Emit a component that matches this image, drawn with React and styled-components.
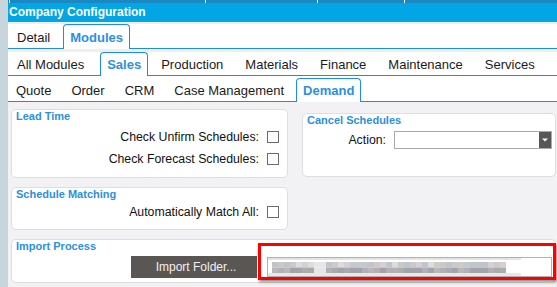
import styled, { createGlobalStyle } from "styled-components";

const GlobalStyle = createGlobalStyle`
  html, body { margin: 0; padding: 0; }
  body {
    font-family: "Liberation Sans", Arial, sans-serif;
    background: #f2f2f4;
  }
  * { box-sizing: border-box; }
`;

const Page = styled.div`
  display: flex;
  width: 557px;
  height: 287px;
  overflow: hidden;
`;

const SideStrip = styled.div`
  width: 8px;
  flex-shrink: 0;
  background: #c6d6dc;
`;

const Main = styled.div`
  flex: 1;
  min-width: 0;
  display: flex;
  flex-direction: column;
  background: #f2f2f4;
`;

const TopStrip = styled.div`
  display: flex;
  height: 3px;
  background: #1c88c2;
`;

const StripSegment = styled.div`
  flex: ${(p) => (p.w ? `0 0 ${p.w}px` : "1")};
  border-right: ${(p) => (p.w ? "1px solid #ffffff" : "none")};
`;

const TitleBar = styled.div`
  height: 19px;
  line-height: 19px;
  padding-left: 1px;
  background: #02a6e4;
  color: #ffffff;
  font-size: 12px;
  font-weight: bold;
`;

const Band = styled.div`
  height: ${(p) => p.h}px;
  background: #efeff0;
`;

// the blue rule under each tab strip is drawn by ::after; the active tab sits above it
const TabRow = styled.div`
  position: relative;
  display: flex;
  align-items: flex-end;
  height: ${(p) => p.h + 1}px;
  background: #ffffff;
  overflow: hidden;
  --tab-pad: ${(p) => p.pad ?? 9}px;
  &::after {
    content: "";
    position: absolute;
    left: 0;
    right: 0;
    bottom: 0;
    height: 1px;
    background: #1b8de6;
  }
`;

const Tab = styled.div`
  flex-shrink: 0;
  height: ${(p) => (p.tall ? 25 : 24)}px;
  margin: 0 ${(p) => (p.active ? 2 : 1)}px;
  padding: 0 ${(p) => (p.active ? "6px" : "var(--tab-pad)")};
  padding-right: ${(p) => (p.extra ? `calc(var(--tab-pad) + ${p.extra}px)` : undefined)};
  display: flex;
  align-items: center;
  font-size: 13px;
  white-space: nowrap;
  color: ${(p) => (p.active ? "#2c8fe2" : "#1a1a1a")};
  font-weight: ${(p) => (p.active ? "bold" : "normal")};
  background: ${(p) => (p.active ? "#ffffff" : "transparent")};
  border: 1px solid ${(p) => (p.active ? "#1b8de6" : "transparent")};
  border-bottom: none;
  border-radius: 4px 4px 0 0;
  position: ${(p) => (p.active ? "relative" : "static")};
  z-index: ${(p) => (p.active ? 1 : "auto")};
  &:first-child {
    margin-left: -1px;
  }
`;

const Content = styled.div`
  display: grid;
  grid-template-columns: 277px 254px;
  column-gap: 14px;
  row-gap: 9px;
  align-items: start;
  padding: 7px 1px 0 3px;
`;

const Panel = styled.div`
  position: relative;
  height: ${(p) => p.h}px;
  margin-top: ${(p) => p.offset || 0}px;
  grid-column: ${(p) => (p.wide ? "1 / -1" : "auto")};
  display: flex;
  flex-direction: column;
  background: #ffffff;
  border: 1px solid #dedede;
  border-radius: 5px;
`;

const PanelTitle = styled.div`
  height: 13px;
  line-height: 13px;
  padding-left: 4px;
  font-size: 11px;
  font-weight: bold;
  color: #2d8fe0;
`;

const FieldList = styled.div`
  display: flex;
  flex-direction: column;
  padding: ${(p) => p.top || 0}px ${(p) => p.right ?? 8}px 0 0;
`;

const FieldRow = styled.div`
  display: flex;
  justify-content: flex-end;
  align-items: center;
  gap: 8px;
  height: 22px;
  font-size: 12.3px;
  color: #111111;
`;

const Check = styled.span`
  width: 12px;
  height: 12px;
  background: #ffffff;
  border: 1px solid #6c6c6c;
`;

const Select = styled.div`
  display: flex;
  justify-content: flex-end;
  width: 158px;
  height: 18px;
  background: #ffffff;
  border: 1px solid #aaaaaa;
`;

const SelectButton = styled.div`
  width: 12px;
  display: flex;
  align-items: center;
  justify-content: center;
  background: #575757;
`;

const ImportRow = styled.div`
  display: flex;
  align-items: center;
  margin-top: 3px;
  padding-left: 119px;
`;

const DarkButton = styled.div`
  width: 126px;
  height: 22px;
  display: flex;
  align-items: center;
  justify-content: center;
  padding-left: 4px;
  background: #595654;
  color: #f2f2f2;
  font-size: 12px;
`;

const PathInput = styled.div`
  width: 285px;
  height: 20px;
  margin-left: 10px;
  background: #ffffff;
  border: 1px solid #b0b0b0;
  overflow: hidden;
`;

const Highlight = styled.div`
  position: absolute;
  left: 246px;
  top: 3px;
  width: 298px;
  height: 37px;
  border: 3px solid #ff0000;
  box-shadow: 1px 2px 3px rgba(0, 0, 0, 0.45);
  pointer-events: none;
`;

const Caret = () => (
  <svg width="6" height="4" viewBox="0 0 6 4">
    <path d="M0 0.5 H6 L3 3.5 Z" fill="#ffffff" />
  </svg>
);

// blurred (pixelated) file path, drawn as mosaic blocks
const tones = {
  top: ["#c9c9cb", "#d6d0d6", "#c0c5ca", "#dcdcdc", "#cfcac4", "#c4c8d0"],
  bottom: ["#a9a9b0", "#b5aeb5", "#9fa5ad", "#b8b8b8", "#aab0a8", "#a4a0ac"],
};

const Mosaic = () => {
  let seed = 7;
  const next = () => {
    seed = (seed * 9301 + 49297) % 233280;
    return seed / 233280;
  };
  const blocks = [];
  for (let c = 0; c < 39; c++) {
    const gap = c === 7 || c === 8;
    ["top", "bottom"].forEach((row, r) => {
      const list = tones[row];
      const fill = gap ? "#e6e6e6" : list[Math.floor(next() * list.length)];
      blocks.push(
        <rect key={`${c}-${r}`} x={4 + c * 6} y={4 + r * 5.5} width="6" height="5.5" fill={fill} />
      );
    });
  }
  return (
    <svg width="253" height="18" viewBox="0 0 253 18">
      <rect x="0" y="0" width="253" height="2" fill="#e4e4e4" />
      <rect x="0" y="15" width="253" height="3" fill="#e8e8e8" />
      {blocks}
    </svg>
  );
};

const App = () => {
  return (
    <>
      <GlobalStyle />
      <Page>
        <SideStrip />
        <Main>
          <TopStrip>
            <StripSegment w={2} />
            <StripSegment w={196} />
            <StripSegment w={112} />
            <StripSegment w={87} />
            <StripSegment />
          </TopStrip>
          <TitleBar>Company Configuration</TitleBar>
          <Band h={2} />
          <TabRow h={24}>
            <Tab>Detail</Tab>
            <Tab active tall>Modules</Tab>
          </TabRow>
          <Band h={3} />
          <TabRow h={23}>
            <Tab extra={3}>All Modules</Tab>
            <Tab active>Sales</Tab>
            <Tab>Production</Tab>
            <Tab>Materials</Tab>
            <Tab>Finance</Tab>
            <Tab>Maintenance</Tab>
            <Tab>Services</Tab>
          </TabRow>
          <TabRow h={25} pad={8}>
            <Tab>Quote</Tab>
            <Tab>Order</Tab>
            <Tab>CRM</Tab>
            <Tab>Case Management</Tab>
            <Tab active>Demand</Tab>
          </TabRow>

          <Content>
            <Panel h={69}>
              <PanelTitle>Lead Time</PanelTitle>
              <FieldList top={3}>
                <FieldRow>
                  Check Unfirm Schedules:
                  <Check />
                </FieldRow>
                <FieldRow>
                  Check Forecast Schedules:
                  <Check />
                </FieldRow>
              </FieldList>
            </Panel>

            <Panel h={64} offset={4}>
              <PanelTitle>Cancel Schedules</PanelTitle>
              <FieldList top={2} right={3}>
                <FieldRow>
                  Action:
                  <Select>
                    <SelectButton>
                      <Caret />
                    </SelectButton>
                  </Select>
                </FieldRow>
              </FieldList>
            </Panel>

            <Panel h={43}>
              <PanelTitle>Schedule Matching</PanelTitle>
              <FieldList>
                <FieldRow>
                  Automatically Match All:
                  <Check />
                </FieldRow>
              </FieldList>
            </Panel>
            <div />

            <Panel h={44} wide>
              <PanelTitle>Import Process</PanelTitle>
              <ImportRow>
                <DarkButton>Import Folder...</DarkButton>
                <PathInput>
                  <Mosaic />
                </PathInput>
              </ImportRow>
              <Highlight />
            </Panel>
          </Content>
        </Main>
      </Page>
    </>
  );
};

export default App;
